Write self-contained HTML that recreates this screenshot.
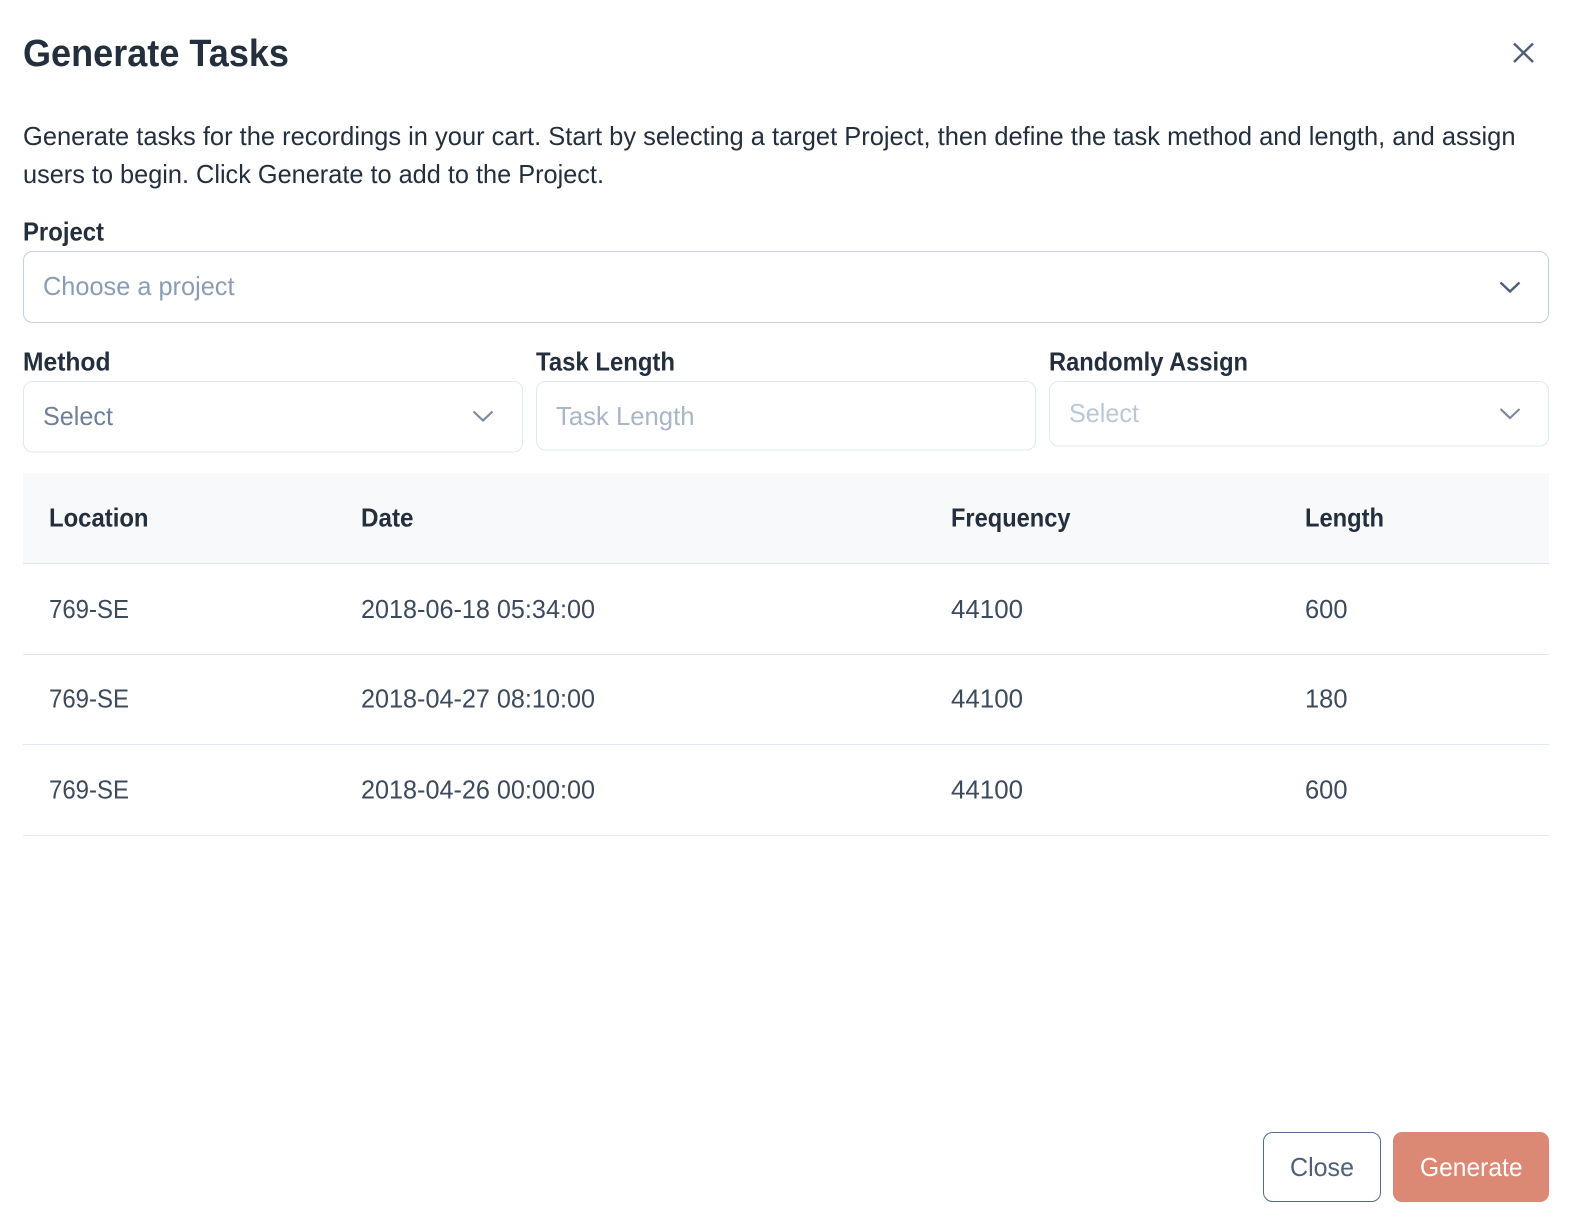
<!DOCTYPE html>
<html>
<head>
<meta charset="utf-8">
<style>
html,body{margin:0;padding:0;background:#fff;width:1570px;height:1232px;overflow:hidden}
svg{display:block}
text{font-family:"Liberation Sans",sans-serif;font-size:25.6px;}
.b{font-weight:700}
.h{fill:#242f3e}
</style>
</head>
<body>
<svg width="1570" height="1232" viewBox="0 0 1570 1232" xmlns="http://www.w3.org/2000/svg">
<rect width="1570" height="1232" fill="#fff"/>
<text x="23" y="66" class="b h" style="font-size:38px" textLength="266" lengthAdjust="spacingAndGlyphs">Generate Tasks</text>
<path d="M1514 43.5L1533 62M1533 43.5L1514 62" stroke="#4f6076" stroke-width="2.4" fill="none"/>

<text x="23" y="145" class="h" textLength="1492.5" lengthAdjust="spacingAndGlyphs">Generate tasks for the recordings in your cart. Start by selecting a target Project, then define the task method and length, and assign</text>
<text x="23" y="183" class="h" textLength="581" lengthAdjust="spacingAndGlyphs">users to begin. Click Generate to add to the Project.</text>

<text x="23" y="240.5" class="b h" textLength="81" lengthAdjust="spacingAndGlyphs">Project</text>
<rect x="23.5" y="251.5" width="1525" height="71" rx="9" fill="#fff" stroke="#c3d0de"/>
<text x="43" y="295" fill="#8a9db5" textLength="191.5" lengthAdjust="spacingAndGlyphs">Choose a project</text>
<path d="M1500.5 282.5L1510 291.5L1519.5 282.5" stroke="#4f6076" stroke-width="2.4" fill="none"/>

<text x="23" y="370.5" class="b h" textLength="87.5" lengthAdjust="spacingAndGlyphs">Method</text>
<text x="536" y="370.5" class="b h" textLength="139" lengthAdjust="spacingAndGlyphs">Task Length</text>
<text x="1049" y="370.5" class="b h" textLength="199" lengthAdjust="spacingAndGlyphs">Randomly Assign</text>

<rect x="23.5" y="381.5" width="499" height="70.5" rx="9" fill="#fff" stroke="#e2e8f0"/>
<text x="43" y="425" fill="#718096" textLength="70" lengthAdjust="spacingAndGlyphs">Select</text>
<path d="M473.5 411.5L483 420.5L492.5 411.5" stroke="#7b8a9d" stroke-width="2.2" fill="none"/>

<rect x="536.5" y="381.5" width="499" height="68.5" rx="9" fill="#fff" stroke="#e2e8f0"/>
<text x="556" y="425" fill="#a9b6c6" textLength="138.5" lengthAdjust="spacingAndGlyphs">Task Length</text>

<rect x="1049.5" y="381.5" width="499" height="64.5" rx="9" fill="#fff" stroke="#e2e8f0"/>
<text x="1069" y="422" fill="#bcc7d5" textLength="70" lengthAdjust="spacingAndGlyphs">Select</text>
<path d="M1500.5 409L1510 418L1519.5 409" stroke="#7b8a9d" stroke-width="2.2" fill="none"/>

<rect x="23" y="473" width="1526" height="90" fill="#f7f9fb"/>
<rect x="23" y="563" width="1526" height="1" fill="#e2e8f0"/>
<rect x="23" y="654" width="1526" height="1" fill="#e2e8f0"/>
<rect x="23" y="744" width="1526" height="1" fill="#e2e8f0"/>
<rect x="23" y="835" width="1526" height="1" fill="#e2e8f0"/>

<text x="49" y="526.5" class="b h" textLength="99.5" lengthAdjust="spacingAndGlyphs">Location</text>
<text x="361" y="526.5" class="b h" textLength="52.5" lengthAdjust="spacingAndGlyphs">Date</text>
<text x="951" y="526.5" class="b h" textLength="119.5" lengthAdjust="spacingAndGlyphs">Frequency</text>
<text x="1305" y="526.5" class="b h" textLength="79" lengthAdjust="spacingAndGlyphs">Length</text>

<text x="49" y="618" fill="#3d4a5c" textLength="80" lengthAdjust="spacingAndGlyphs">769-SE</text>
<text x="361" y="618" fill="#3d4a5c" textLength="234" lengthAdjust="spacingAndGlyphs">2018-06-18 05:34:00</text>
<text x="951" y="618" fill="#3d4a5c" textLength="72" lengthAdjust="spacingAndGlyphs">44100</text>
<text x="1305" y="618" fill="#3d4a5c" textLength="42.5" lengthAdjust="spacingAndGlyphs">600</text>

<text x="49" y="707.5" fill="#3d4a5c" textLength="80" lengthAdjust="spacingAndGlyphs">769-SE</text>
<text x="361" y="707.5" fill="#3d4a5c" textLength="234" lengthAdjust="spacingAndGlyphs">2018-04-27 08:10:00</text>
<text x="951" y="707.5" fill="#3d4a5c" textLength="72" lengthAdjust="spacingAndGlyphs">44100</text>
<text x="1305" y="707.5" fill="#3d4a5c" textLength="42.5" lengthAdjust="spacingAndGlyphs">180</text>

<text x="49" y="798.5" fill="#3d4a5c" textLength="80" lengthAdjust="spacingAndGlyphs">769-SE</text>
<text x="361" y="798.5" fill="#3d4a5c" textLength="234" lengthAdjust="spacingAndGlyphs">2018-04-26 00:00:00</text>
<text x="951" y="798.5" fill="#3d4a5c" textLength="72" lengthAdjust="spacingAndGlyphs">44100</text>
<text x="1305" y="798.5" fill="#3d4a5c" textLength="42.5" lengthAdjust="spacingAndGlyphs">600</text>

<rect x="1263.5" y="1132.5" width="117" height="69" rx="9" fill="#fff" stroke="#56698a"/>
<text x="1290" y="1176" fill="#4f6078" textLength="64" lengthAdjust="spacingAndGlyphs">Close</text>
<rect x="1393" y="1132" width="156" height="70" rx="9" fill="#db8874"/>
<text x="1420" y="1176" fill="#fff" textLength="102.5" lengthAdjust="spacingAndGlyphs">Generate</text>
</svg>
</body>
</html>
